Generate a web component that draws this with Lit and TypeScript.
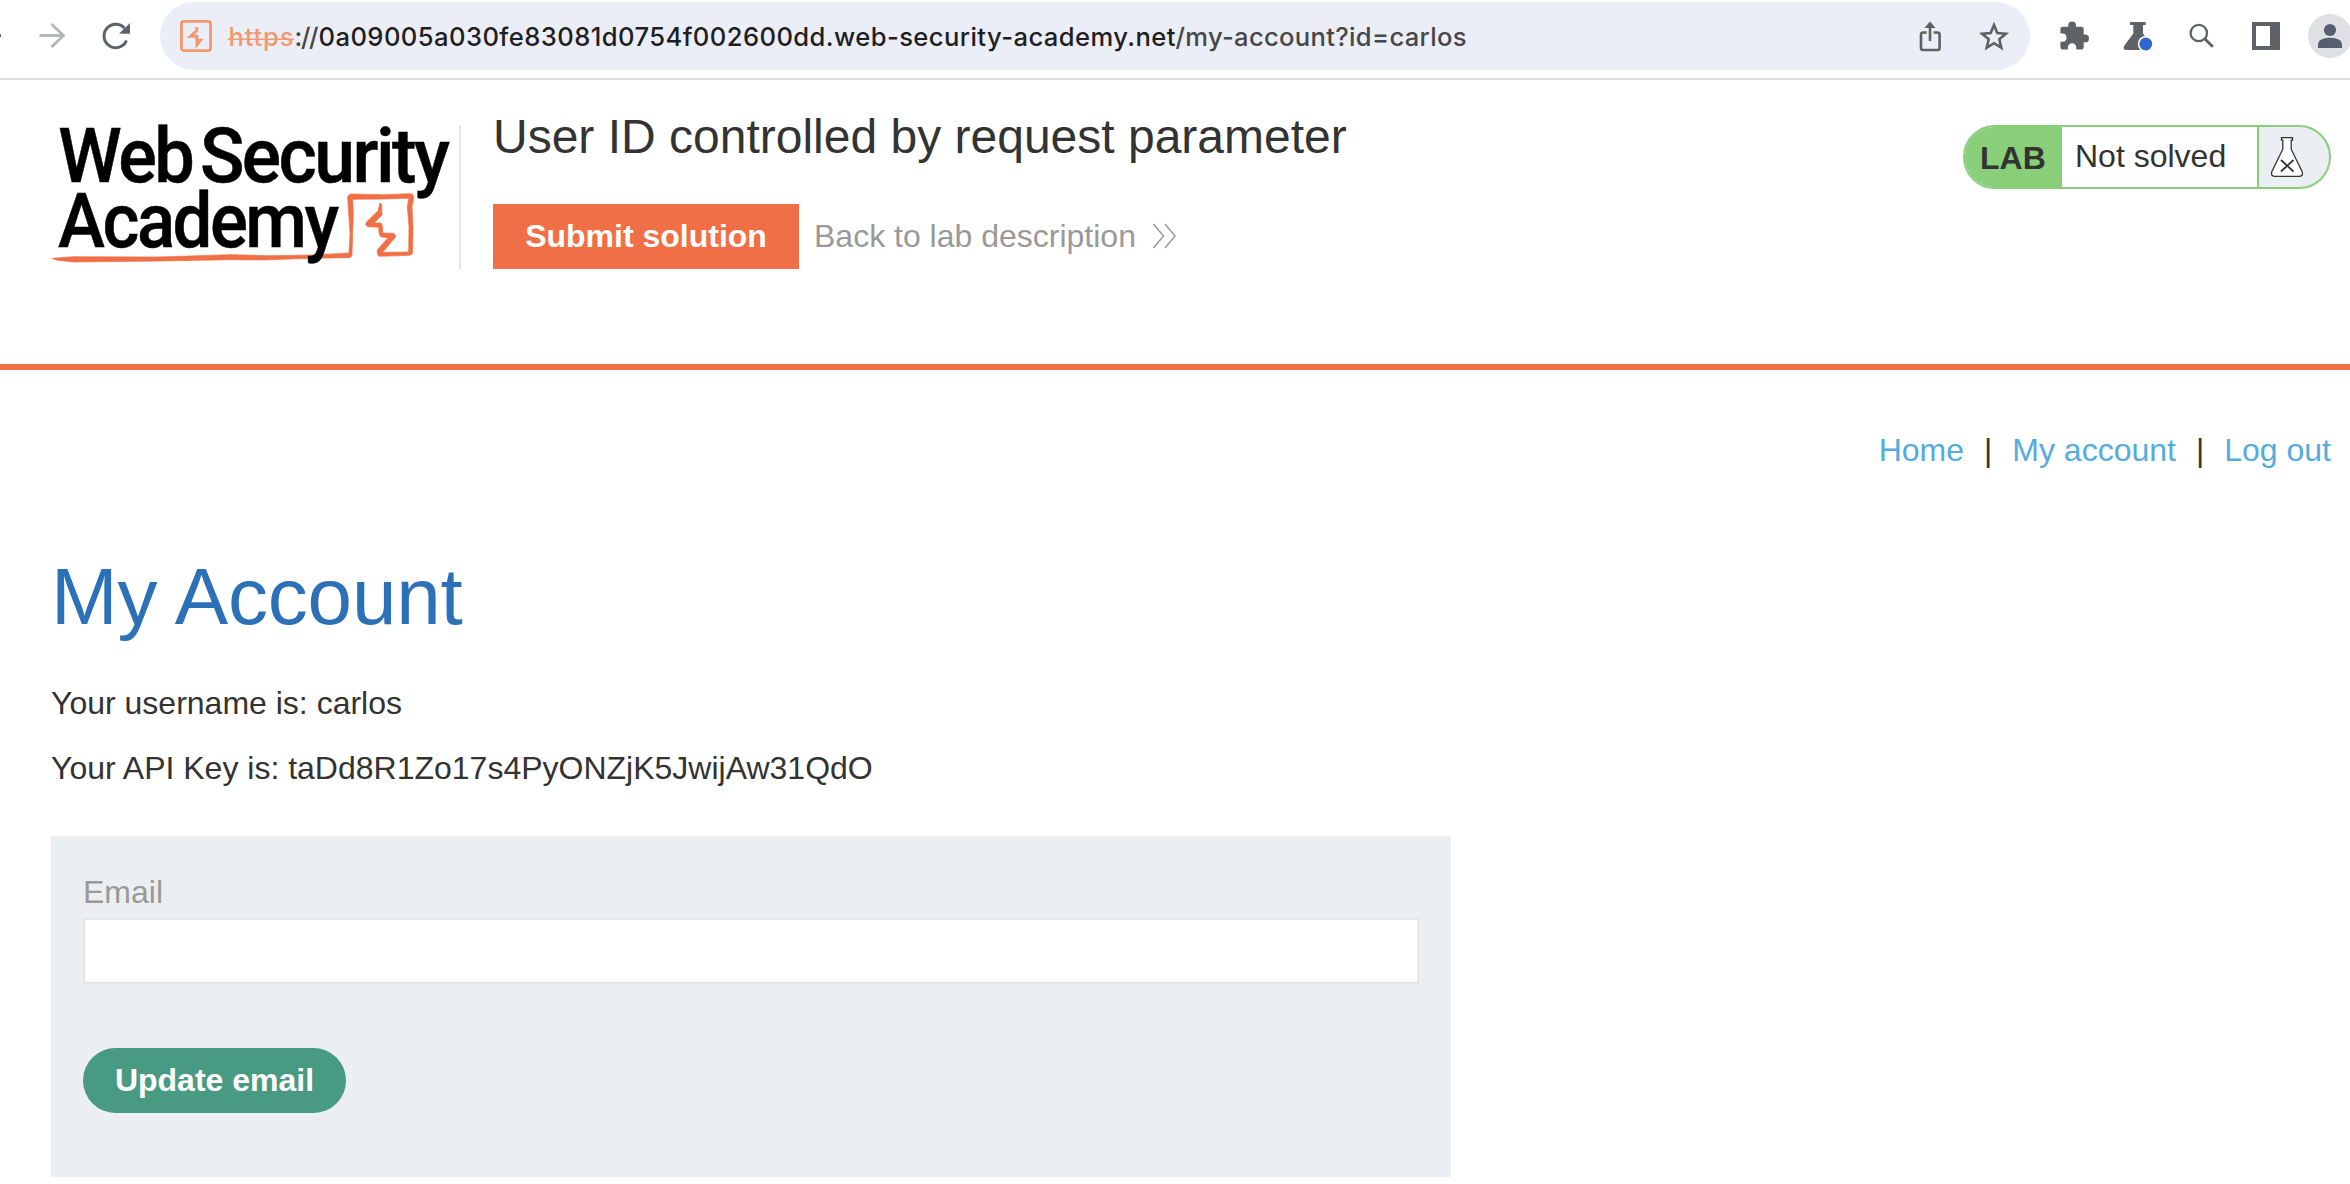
import { LitElement, html, css, svg } from "lit";
import { customElement } from "lit/decorators.js";

@customElement("browser-bar")
class BrowserBar extends LitElement {
  static styles = css`
    :host { display: block; }
    .bar { display: flex; align-items: flex-start; height: 80px; box-sizing: border-box; border-bottom: 2px solid #dcdcdc; background: #fff; overflow: hidden; }
    .left { width: 160px; height: 72px; flex: none; }
    .pill { width: 1870px; height: 68px; margin-top: 2px; border-radius: 34px; background: #ebeef7; display: flex; flex: none; box-sizing: border-box; padding-left: 20px; }
    .site { width: 32px; height: 68px; flex: none; }
    .url { flex: 1; margin-left: 16px; height: 68px; }
    .pillicons { width: 130px; height: 68px; flex: none; }
    .right { width: 320px; height: 72px; flex: none; }
    svg { display: block; }
    text { font-family: Inter, "Liberation Sans", sans-serif; font-size: 25.6px; font-weight: 500; }
    .bad { fill: #f2996e; }
    .dim { fill: #474747; }
    .host { fill: #1f1f1f; }
  `;
  render() {
    return html`<div class="bar">
      <svg class="left" viewBox="0 0 160 72" fill="none">
        <path d="M-4 35.500H1" stroke="#5f6368" stroke-width="3"/>
        <path d="M39.500 35.500H63M51.500 24l12 11.500-12 11.500" stroke="#b4b6b8" stroke-width="2.800"/>
        <path d="M126.500 40.500A11.700 11.700 0 1 1 124.500 28.200" stroke="#5f6368" stroke-width="3"/>
        <path d="M130 23v10.800h-11z" fill="#5f6368"/>
      </svg>
      <div class="pill">
        <svg class="site" viewBox="0 0 32 68" fill="none">
          <rect x="1.400" y="19.400" width="29.200" height="29.200" rx="2.500" stroke="#f2996e" stroke-width="2.800"/>
          <path d="M16.800 25v3.500L10.500 34.300h6.300v4h3.800L17 42.800v-4.300" stroke="#f2996e" stroke-width="2.900"/>
        </svg>
        <svg class="url" viewBox="0 0 1304 68" preserveAspectRatio="xMinYMin meet">
          <text class="bad" x="0.500" y="43.600" textLength="65">https</text>
          <path d="M0 37.300H66" stroke="#f2996e" stroke-width="1.600"/>
          <text class="dim" x="66.500" y="43.600" textLength="24">://</text>
          <text class="host" x="90.500" y="43.600" textLength="857">0a09005a030fe83081d0754f002600dd.web-security-academy.net</text>
          <text class="dim" x="947.500" y="43.600" textLength="291">/my-account?id=carlos</text>
        </svg>
        <svg class="pillicons" viewBox="-3.700 0 130 68" fill="none" stroke="#5f6061">
          <path d="M23 30.500h-3.500q-2.200 0-2.200 2V46q0 2 2 2h14.600q2 0 2-2V32.500q0-2-2.200-2H30M26.300 39V22.500" stroke-width="2.600"/>
          <path d="M26.300 19.500l5.600 6.500H20.700z" fill="#5f6061" stroke="none"/>
          <path d="M90.300 23l3.300 8 8.600.7-6.600 5.600 2 8.400-7.300-4.500-7.300 4.500 2-8.400-6.600-5.600 8.600-.7z" stroke-width="2.600"/>
        </svg>
      </div>
      <svg class="right" viewBox="2030 0 320 72">
        <path fill="#5f6368" d="M2060.400 29q0-2.200 2.200-2.200h5.600v-1.400a3.900 3.900 0 0 1 7.800 0v1.400h5.600q2.100 0 2.100 2.200v5.500h1.400a3.900 3.900 0 0 1 0 7.800h-1.400v5q0 2.200-2.200 2.200h-5.200v-2a4.200 4.200 0 0 0-8.400 0v2h-5.300q-2.200 0-2.200-2.200v-5.500h2a4.100 4.100 0 0 0 0-8.200h-2z"/>
        <path fill="#5f6368" d="M2130 22h15.700v3h-2.700v8.500l8.600 12q2.400 4.500-2.200 4.500h-22.800q-4.600 0-2.200-4.500l8.900-12V25h-3.300z"/>
        <circle cx="2145.800" cy="44" r="8" fill="#fff"/>
        <circle cx="2145.800" cy="44" r="6.400" fill="#3067d1"/>
        <circle cx="2198.800" cy="33" r="8.200" fill="none" stroke="#5f6368" stroke-width="2.300"/>
        <path d="M2204.500 38.500l8.300 8.300" stroke="#5f6368" stroke-width="3"/>
        <path fill="#5f6368" fill-rule="evenodd" d="M2252 22h28v28h-28zM2256 26v20h14V26z"/>
        <circle cx="2330" cy="36" r="22" fill="#dfe0e4"/>
        <circle cx="2330" cy="30" r="6.100" fill="#565f71"/>
        <path fill="#565f71" d="M2318 48v-3.500q0-4.500 6-6 6-1.600 12 0 6 1.500 6 6V48z"/>
      </svg>
    </div>`;
  }
}

@customElement("academy-logo")
class AcademyLogo extends LitElement {
  static styles = css`
    :host { display: block; }
    svg { display: block; width: 400px; height: 144px; overflow: visible; }
    text { font-family: Roboto, "Liberation Sans", sans-serif; font-weight: 500; font-size: 230px; letter-spacing: -8px; fill: #000; stroke: #000; stroke-width: 1.500px; }
  `;
  render() {
    const word = (t: string, x: number, y: number, w: number) =>
      svg`<text x=${x} y=${y} textLength=${w} lengthAdjust="spacingAndGlyphs">${t}</text>`;
    return html`<svg viewBox="60 72 1200 432">
      <path fill="#f06f46" stroke="#f06f46" stroke-width="2" d="M66 475L132 470 380 471 600 464 720 467 850 465 957 459 960 400 956 340 953 296Q952 284 964 282L1060 284 1141 281Q1151 281 1151 292L1146 322 1149 380 1148 455Q1148 465 1138 466L1050 469Q1040 468 1042 450L1074 413 1054 411Q1046 408 1046 382L1012 380Q1004 374 1010 366L1044 332 1050 309 1055 312 1056 345 1032 369 1052 369Q1059 372 1058 399L1090 400Q1099 404 1096 412L1058 457 1136 456 1137 380 1132 320 1136 295 1060 297 968 298 970 340 968 400 966 464Q966 472 956 473L840 475 700 480 600 479 400 483 132 486 82 481z"/>
      ${word("Web", 85, 247, 402)}
      ${word("Security", 510, 247, 742)}
      ${word("Academy", 84, 441, 836)}
    </svg>`;
  }
}

@customElement("app-root")
class AppRoot extends LitElement {
  static styles = css`
    :host { display: block; font-family: "Liberation Sans", Arial, sans-serif; font-size: 32px; line-height: 36px; color: #333332; background: #fff; height: 1184px; overflow: hidden; }
    .head { display: flex; align-items: flex-start; height: 290px; box-sizing: border-box; border-bottom: 6px solid #f06f46; padding: 25px 19px 0 50px; }
    .brand { width: 409px; height: 144px; margin-top: 20px; border-right: 2px solid #e5e5e5; flex: none; }
    .brand academy-logo { margin-top: -1px; }
    .main { margin-left: 32px; flex: 1; }
    h1 { font-weight: 400; margin: 4px 0 0; font-size: 48px; line-height: 56px; white-space: nowrap; }
    .actions { display: flex; margin-top: 39px; align-items: center; }
    .submit { background: #f06f46; color: #fff; font-weight: 700; width: 306px; height: 65px; line-height: 65px; text-align: center; }
    .back { display: flex; align-items: center; margin-left: 15px; gap: 16px; color: #999; line-height: 63px; height: 65px; }
    .back svg { display: block; width: 26px; height: 26px; margin-bottom: 2px; }
    .status { display: flex; width: 368px; height: 64px; box-sizing: border-box; border: 2px solid #89cf7a; border-radius: 32px; margin-top: 20px; overflow: hidden; background: #ebeff3; flex: none; }
    .lab { width: 97px; background: #89cf7a; font-weight: 700; padding-left: 15px; box-sizing: border-box; line-height: 62px; flex: none; }
    .state { width: 182px; background: #fff; border-right: 2px solid #89cf7a; line-height: 59px; padding-left: 13px; flex: none; }
    .flask { display: block; width: 32px; height: 42px; margin: 9px 0 0 12px; }
    nav { display: flex; justify-content: flex-end; padding: 62px 19px 0 0; gap: 20px; }
    nav a { color: #54abe0; }
    .content { padding: 0 0 0 51px; }
    h2 { margin: 83px 0 0; font-size: 80px; line-height: 92px; font-weight: 400; color: #2c71b8; letter-spacing: -0.2px; }
    p { margin: 0; line-height: 36px; }
    .user { margin-top: 42px; }
    .key { margin-top: 29px; }
    form { display: flex; flex-direction: column; align-items: flex-start; margin-top: 50px; width: 1400px; height: 341px; box-sizing: border-box; background: #ebeff2; padding: 38px 32px 0; }
    label { color: #999; line-height: 36px; }
    input { width: 1336px; height: 66px; box-sizing: border-box; border: 2px solid #e6e6e6; background: #fff; margin: 8px 0 0; padding: 0 12px; font: inherit; border-radius: 0; outline: none; }
    button { margin: 64px 0 0; width: 263px; height: 65px; border: 0; border-radius: 33px; background: #489a82; color: #fff; font: 700 32px/63px "Liberation Sans", sans-serif; padding: 0; }
  `;
  render() {
    return html`
      <browser-bar></browser-bar>
      <header class="head">
        <div class="brand"><academy-logo></academy-logo></div>
        <div class="main">
          <h1>User ID controlled by request parameter</h1>
          <div class="actions">
            <div class="submit">Submit solution</div>
            <div class="back"><span>Back to lab description</span>
              <svg viewBox="0 0 26 26" fill="none" stroke="#999" stroke-width="1.500"><path d="M1.500 1l10 12-10 12M13 1l10 12-10 12"/></svg>
            </div>
          </div>
        </div>
        <div class="status">
          <div class="lab">LAB</div>
          <div class="state">Not solved</div>
          <svg class="flask" viewBox="0 0 32 42" fill="none" stroke="#333332">
            <path fill="#fff" stroke-width="1.300" d="M10.500 1.700h11v2.500h-1.300v9l11 22.500q1.200 4.600-2.700 4.600H3.500q-3.900 0-2.700-4.600l11-22.500v-9h-1.300z"/>
            <path stroke-width="1.800" d="M10 24l12.500 11.500M22.500 24L10 35.500"/>
          </svg>
        </div>
      </header>
      <nav><a>Home</a><span>|</span><a>My account</a><span>|</span><a>Log out</a></nav>
      <main class="content">
        <h2>My Account</h2>
        <p class="user">Your username is: carlos</p>
        <p class="key">Your API Key is: taDd8R1Zo17s4PyONZjK5JwijAw31QdO</p>
        <form>
          <label>Email</label>
          <input type="email" aria-label="Email" />
          <button type="button">Update email</button>
        </form>
      </main>`;
  }
}
